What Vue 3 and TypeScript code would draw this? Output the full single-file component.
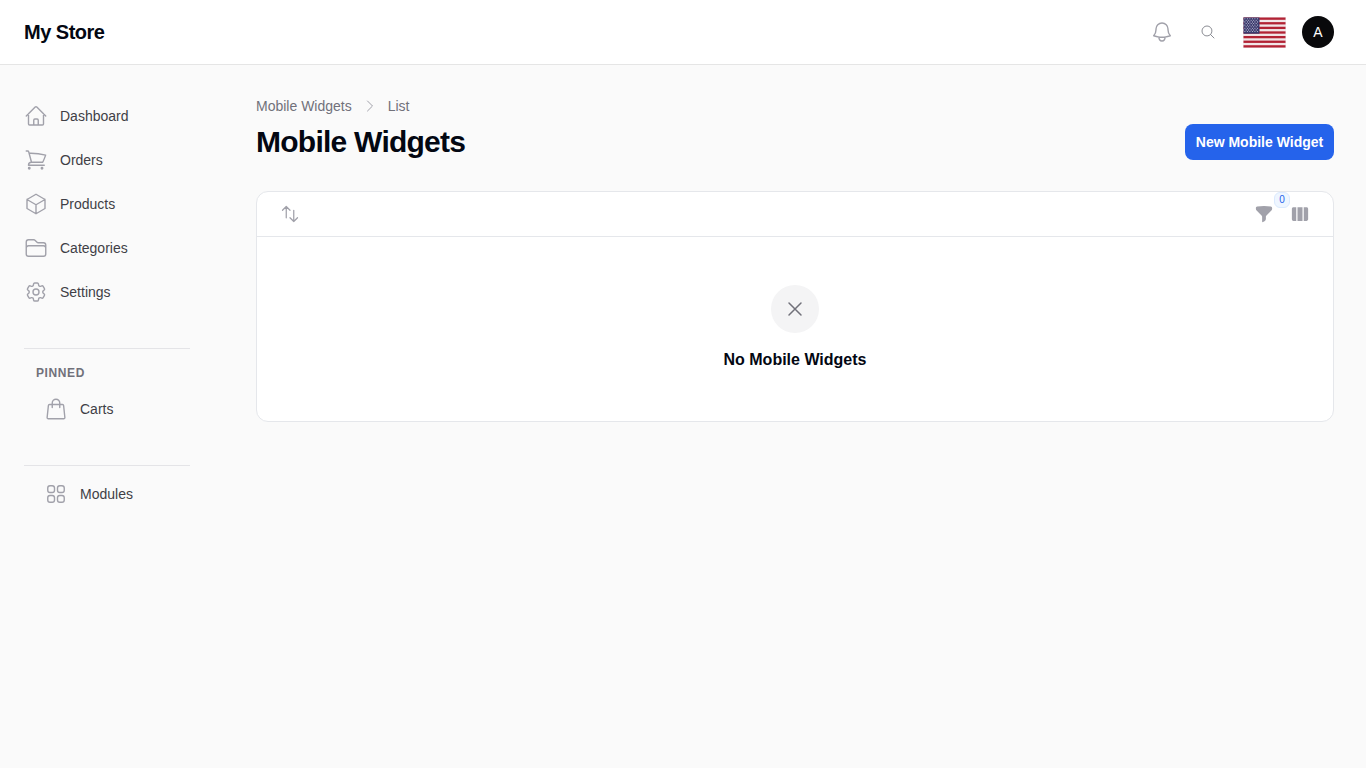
<script setup lang="ts">
interface NavItem { label: string; paths: string[] }
const d = {
  home: 'm2.25 12 8.954-8.955c.44-.439 1.152-.439 1.591 0L21.75 12M4.5 9.75v10.125c0 .621.504 1.125 1.125 1.125H9.75v-4.875c0-.621.504-1.125 1.125-1.125h2.25c.621 0 1.125.504 1.125 1.125V21h4.125c.621 0 1.125-.504 1.125-1.125V9.75M8.25 21h8.25',
  cart: 'M2.25 3h1.386c.51 0 .955.343 1.087.835l.383 1.437M7.5 14.25a3 3 0 0 0-3 3h15.75m-12.75-3h11.218c1.121-2.3 2.1-4.684 2.924-7.138a60.114 60.114 0 0 0-16.536-1.84M7.5 14.25 5.106 5.272M6 20.25a.75.75 0 1 1-1.5 0 .75.75 0 0 1 1.5 0Zm12.75 0a.75.75 0 1 1-1.5 0 .75.75 0 0 1 1.5 0Z',
  cube: 'm21 7.5-9-5.25L3 7.5m18 0-9 5.25m9-5.25v9l-9 5.25M3 7.5l9 5.25M3 7.5v9l9 5.25m0-9v9',
  folder: 'M2.25 12.75V12A2.25 2.25 0 0 1 4.5 9.75h15A2.25 2.25 0 0 1 21.75 12v.75m-8.69-6.44-2.12-2.12a1.5 1.5 0 0 0-1.061-.44H4.5A2.25 2.25 0 0 0 2.25 6v12a2.25 2.25 0 0 0 2.25 2.25h15A2.25 2.25 0 0 0 21.75 18V9a2.25 2.25 0 0 0-2.25-2.25h-5.379a1.5 1.5 0 0 1-1.06-.44Z',
  cog: 'M9.594 3.94c.09-.542.56-.94 1.11-.94h2.593c.55 0 1.02.398 1.11.94l.213 1.281c.063.374.313.686.645.87.074.04.147.083.22.127.325.196.72.257 1.075.124l1.217-.456a1.125 1.125 0 0 1 1.37.49l1.296 2.247a1.125 1.125 0 0 1-.26 1.431l-1.003.827c-.293.241-.438.613-.43.992a7.723 7.723 0 0 1 0 .255c-.008.378.137.75.43.991l1.004.827c.424.35.534.955.26 1.43l-1.298 2.247a1.125 1.125 0 0 1-1.369.491l-1.217-.456c-.355-.133-.75-.072-1.076.124a6.47 6.47 0 0 1-.22.128c-.331.183-.581.495-.644.869l-.213 1.281c-.09.543-.56.94-1.11.94h-2.594c-.55 0-1.019-.398-1.11-.94l-.213-1.281c-.062-.374-.312-.686-.644-.87a6.52 6.52 0 0 1-.22-.127c-.325-.196-.72-.257-1.076-.124l-1.217.456a1.125 1.125 0 0 1-1.369-.49l-1.297-2.247a1.125 1.125 0 0 1 .26-1.431l1.004-.827c.292-.24.437-.613.43-.991a6.932 6.932 0 0 1 0-.255c.007-.38-.138-.751-.43-.992l-1.004-.827a1.125 1.125 0 0 1-.26-1.43l1.297-2.247a1.125 1.125 0 0 1 1.37-.491l1.216.456c.356.133.751.072 1.076-.124.072-.044.146-.086.22-.128.332-.183.582-.495.644-.869l.214-1.28Z M15 12a3 3 0 1 1-6 0 3 3 0 0 1 6 0Z',
  bag: 'M15.75 10.5V6a3.75 3.75 0 1 0-7.5 0v4.5m11.356-1.993 1.263 12c.07.665-.45 1.243-1.119 1.243H4.25a1.125 1.125 0 0 1-1.12-1.243l1.264-12A1.125 1.125 0 0 1 5.513 7.5h12.974c.576 0 1.059.435 1.119 1.007Z',
  grid: 'M3.75 6A2.25 2.25 0 0 1 6 3.75h2.25A2.25 2.25 0 0 1 10.5 6v2.25a2.25 2.25 0 0 1-2.25 2.25H6a2.25 2.25 0 0 1-2.25-2.25V6ZM3.75 15.75A2.25 2.25 0 0 1 6 13.5h2.25a2.25 2.25 0 0 1 2.25 2.25V18a2.25 2.25 0 0 1-2.25 2.25H6A2.25 2.25 0 0 1 3.75 18v-2.25ZM13.5 6a2.25 2.25 0 0 1 2.25-2.25H18A2.25 2.25 0 0 1 20.25 6v2.25A2.25 2.25 0 0 1 18 10.5h-2.25a2.25 2.25 0 0 1-2.25-2.25V6ZM13.5 15.75a2.25 2.25 0 0 1 2.25-2.25H18a2.25 2.25 0 0 1 2.25 2.25V18A2.25 2.25 0 0 1 18 20.25h-2.25A2.25 2.25 0 0 1 13.5 18v-2.25Z',
}
const primary: NavItem[] = [
  { label: 'Dashboard', paths: [d.home] },
  { label: 'Orders', paths: [d.cart] },
  { label: 'Products', paths: [d.cube] },
  { label: 'Categories', paths: [d.folder] },
  { label: 'Settings', paths: [d.cog] },
]
const stripes = [0, 2, 4, 6, 8, 10, 12]
const stars: { x: number; y: number }[] = []
for (let r = 0; r < 9; r++) {
  const n = r % 2 === 0 ? 6 : 5
  for (let c = 0; c < n; c++) {
    stars.push({ x: (r % 2 === 0 ? 1.4 : 2.65) + c * 2.5, y: 1.2 + r * 1.6 })
  }
}
</script>

<template>
  <div class="page">
    <header class="topbar">
      <div class="logo">My Store</div>
      <div class="actions">
        <svg class="bell" viewBox="0 0 24 24" fill="none" stroke="currentColor" stroke-width="1.4" stroke-linecap="round" stroke-linejoin="round"><path d="M14.857 17.082a23.848 23.848 0 0 0 5.454-1.31A8.967 8.967 0 0 1 18 9.75V9A6 6 0 0 0 6 9v.75a8.967 8.967 0 0 1-2.312 6.022c1.733.64 3.56 1.085 5.455 1.31m5.714 0a24.255 24.255 0 0 1-5.714 0m5.714 0a3 3 0 1 1-5.714 0" /></svg>
        <svg class="search" viewBox="0 0 24 24" fill="none" stroke="currentColor" stroke-width="1.5" stroke-linecap="round" stroke-linejoin="round"><path d="m21 21-5.197-5.197m0 0A7.5 7.5 0 1 0 5.196 5.196a7.5 7.5 0 0 0 10.607 10.607Z" /></svg>
        <svg class="flag" viewBox="0 0 43 31" preserveAspectRatio="none">
          <rect width="43" height="31" fill="#f1e6e8" />
          <rect v-for="s in stripes" :key="s" x="0.5" :y="0.5 + s * 2.31" width="42" height="2.31" fill="#b22234" />
          <rect x="0.5" y="0.5" width="16" height="16.2" fill="#3c3b6e" />
          <circle v-for="(p, i) in stars" :key="i" :cx="0.5 + p.x" :cy="0.5 + p.y" r="0.55" fill="#cfd0e2" />
        </svg>
        <div class="avatar">A</div>
      </div>
    </header>

    <div class="body">
      <aside class="sidebar">
        <nav class="nav">
          <a v-for="item in primary" :key="item.label" class="nav-item">
            <svg class="nav-icon" viewBox="0 0 24 24" fill="none" stroke="currentColor" stroke-width="1.4" stroke-linecap="round" stroke-linejoin="round"><path v-for="p in item.paths" :key="p" :d="p" /></svg>
            <span>{{ item.label }}</span>
          </a>
        </nav>
        <div class="rule first"></div>
        <div class="group-label">PINNED</div>
        <a class="nav-item nested">
          <svg class="nav-icon" viewBox="0 0 24 24" fill="none" stroke="currentColor" stroke-width="1.4" stroke-linecap="round" stroke-linejoin="round"><path :d="d.bag" /></svg>
          <span>Carts</span>
        </a>
        <div class="rule second"></div>
        <a class="nav-item nested modules">
          <svg class="nav-icon" viewBox="0 0 24 24" fill="none" stroke="currentColor" stroke-width="1.4" stroke-linecap="round" stroke-linejoin="round"><path :d="d.grid" /></svg>
          <span>Modules</span>
        </a>
      </aside>

      <main class="main">
        <div class="head">
          <div>
            <div class="crumbs">
              <span>Mobile Widgets</span>
              <svg class="chev" viewBox="0 0 24 24" fill="none" stroke="currentColor" stroke-width="1.5" stroke-linecap="round" stroke-linejoin="round"><path d="m8.25 4.5 7.5 7.5-7.5 7.5" /></svg>
              <span>List</span>
            </div>
            <h1 class="title">Mobile Widgets</h1>
          </div>
          <button class="primary" type="button">New Mobile Widget</button>
        </div>

        <section class="card">
          <div class="toolbar">
            <svg class="sort" viewBox="0 0 24 24" fill="none" stroke="currentColor" stroke-width="1.5" stroke-linecap="round" stroke-linejoin="round"><path d="M3 7.5 7.5 3m0 0L12 7.5M7.5 3v13.5m13.5 0L16.5 21m0 0L12 16.5m4.5 4.5V7.5" /></svg>
            <div class="tools">
              <div class="filter">
                <svg viewBox="0 0 24 24" fill="currentColor"><path d="M3.792 2.938A49.069 49.069 0 0 1 12 2.25c2.797 0 5.54.236 8.209.688a1.857 1.857 0 0 1 1.541 1.836v1.044a3 3 0 0 1-.879 2.121l-6.182 6.182a1.5 1.5 0 0 0-.439 1.061v2.927a3 3 0 0 1-1.658 2.684l-1.757.878A.75.75 0 0 1 9.75 21v-5.818a1.5 1.5 0 0 0-.44-1.06L3.13 7.938a3 3 0 0 1-.879-2.121V4.774c0-.897.64-1.683 1.542-1.836Z" /></svg>
                <span class="badge">0</span>
              </div>
              <svg viewBox="0 0 24 24" fill="currentColor"><path d="M15 3.75H9v16.5h6V3.75ZM16.5 20.25h3.375c1.035 0 1.875-.84 1.875-1.875V5.625c0-1.036-.84-1.875-1.875-1.875H16.5v16.5ZM4.125 3.75H7.5v16.5H4.125a1.875 1.875 0 0 1-1.875-1.875V5.625c0-1.036.84-1.875 1.875-1.875Z" /></svg>
            </div>
          </div>
          <div class="empty">
            <div class="empty-icon">
              <svg viewBox="0 0 24 24" fill="none" stroke="currentColor" stroke-width="1.5" stroke-linecap="round" stroke-linejoin="round"><path d="M6 18 18 6M6 6l12 12" /></svg>
            </div>
            <div class="empty-text">No Mobile Widgets</div>
          </div>
        </section>
      </main>
    </div>
  </div>
</template>

<style>
html, body { margin: 0; background: #fafafa; }
</style>

<style scoped>
.page {
  min-height: 768px;
  background: #fafafa;
  font-family: "Liberation Sans", Arial, sans-serif;
  color: #030712;
}
.topbar {
  height: 64px;
  background: #fff;
  border-bottom: 1px solid #e5e5e5;
  display: flex;
  align-items: center;
  justify-content: space-between;
  padding: 0 32px 0 24px;
}
.logo { font-size: 20px; font-weight: 700; letter-spacing: -0.5px; color: #030712; }
.actions { display: flex; align-items: center; color: #a1a1aa; }
.bell { width: 24px; height: 24px; margin-right: 26px; }
.search { width: 16px; height: 16px; margin-right: 27px; color: #8b8d94; }
.flag { width: 43px; height: 31px; margin-right: 16px; }
.avatar {
  width: 32px; height: 32px; border-radius: 50%;
  background: #09090b; color: #fff;
  display: flex; align-items: center; justify-content: center;
  font-size: 14px;
}
.body { display: flex; align-items: flex-start; }
.sidebar { width: 166px; margin: 0 66px 0 24px; padding-top: 29px; flex: none; }
.nav { display: flex; flex-direction: column; }
.nav-item {
  height: 44px;
  display: flex; align-items: center; gap: 12px;
  font-size: 14px; color: #3f3f46;
}
.nav-icon { width: 24px; height: 24px; color: #a1a1aa; flex: none; }
.nested { padding-left: 20px; }
.rule { height: 1px; background: #e4e4e7; }
.rule.first { margin-top: 34px; }
.group-label {
  margin: 16px 0 6px 12px;
  font-size: 12px; line-height: 16px; font-weight: 700;
  letter-spacing: 0.6px; color: #71717a;
}
.rule.second { margin-top: 34px; }
.modules { margin-top: 6px; }
.main { flex: 1; min-width: 0; padding: 31px 32px 0 0; }
.head { display: flex; align-items: flex-end; justify-content: space-between; }
.crumbs {
  display: flex; align-items: center; gap: 10px;
  font-size: 14px; line-height: 20px; color: #71717a;
}
.chev { width: 16px; height: 16px; color: #a1a1aa; }
.title {
  margin: 8px 0 0;
  font-size: 30px; line-height: 36px; font-weight: 700;
  letter-spacing: -0.75px; color: #030712;
}
.primary {
  width: 149px; height: 36px;
  background: #2563eb; color: #fff;
  border: 0; border-radius: 8px;
  font: 700 14px "Liberation Sans", Arial, sans-serif;
}
.card {
  margin-top: 31px;
  background: #fff;
  border: 1px solid #e5e7eb;
  border-radius: 12px;
}
.toolbar {
  height: 44px;
  border-bottom: 1px solid #e5e7eb;
  display: flex; align-items: center; justify-content: space-between;
  padding: 0 23px;
  color: #a1a1aa;
}
.toolbar svg { width: 20px; height: 20px; display: block; }
.sort { color: #a1a1aa; }
.tools { display: flex; align-items: center; gap: 16px; }
.filter { position: relative; }
.badge {
  position: absolute; left: 20px; top: -12px;
  min-width: 16px; height: 16px; border-radius: 6px;
  background: #eff6ff; border: 1px solid #dbeafe; box-sizing: border-box;
  color: #2563eb; font-size: 10px; line-height: 14px; text-align: center;
}
.empty { height: 184px; display: flex; flex-direction: column; align-items: center; padding-top: 48px; box-sizing: border-box; }
.empty-icon {
  width: 48px; height: 48px; border-radius: 50%;
  background: #f4f4f5; color: #71717a;
  display: flex; align-items: center; justify-content: center;
}
.empty-icon svg { width: 24px; height: 24px; }
.empty-text { margin-top: 15px; font-size: 16px; line-height: 24px; font-weight: 700; color: #030712; }
</style>
